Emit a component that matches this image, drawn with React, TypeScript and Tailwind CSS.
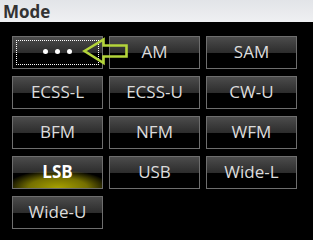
import React from "react";

const modes = ["•••", "AM", "SAM", "ECSS-L", "ECSS-U", "CW-U", "BFM", "NFM", "WFM", "LSB", "USB", "Wide-L", "Wide-U"];

function Btn({ label, idx }: { label: string; idx: number }) {
  const active = label === "LSB";
  const focused = idx === 0;
  return (
    <div className="relative h-[33px] border border-[#6e6e6e] overflow-hidden bg-black">
      <div className="absolute inset-x-0 top-0 h-1/2 bg-gradient-to-b from-[#4c4c4c] to-[#2c2c2c]" />
      {active && (
        <div className="absolute left-1/2 -translate-x-1/2 bottom-[-18px] w-[104px] h-[36px] rounded-[50%] bg-[radial-gradient(ellipse_at_center,#a8a200_0%,#757000_40%,rgba(0,0,0,0)_72%)]" />
      )}
      {focused && <div className="absolute inset-[3px] border border-dotted border-white" />}
      <div
        className={`relative flex h-full items-center justify-center pb-[2px] text-[17px] leading-none ${
          active ? "font-bold text-white" : "text-[#dcdcdc]"
        }`}
        style={{ fontFamily: '"Open Sans", "Noto Sans", sans-serif' }}
      >
        {focused ? (
          <span className="flex gap-[7px]">
            <span className="block w-[5px] h-[5px] rounded-full bg-white" />
            <span className="block w-[5px] h-[5px] rounded-full bg-white" />
            <span className="block w-[5px] h-[5px] rounded-full bg-white" />
          </span>
        ) : (
          label
        )}
      </div>
    </div>
  );
}

export default function App() {
  return (
    <div className="w-[313px] h-[240px] bg-black overflow-hidden relative">
      <div
        className="h-[22px] bg-gradient-to-b from-[#e2e4e8] to-[#eff0f2] pl-[3px] flex items-center text-[17px] font-bold text-[#333] leading-none"
        style={{ fontFamily: '"Open Sans", "Noto Sans", sans-serif' }}
      >
        Mode
      </div>
      <div className="grid grid-cols-[91px_91px_91px] gap-x-[6px] gap-y-[7px] pl-[12px] pt-[14px]">
        {modes.map((m, i) => (
          <Btn key={m} label={m} idx={i} />
        ))}
      </div>
      <svg className="absolute left-[82px] top-[37px]" width="48" height="30" viewBox="0 0 48 30">
        <path
          d="M2.5 14 L21.5 2.5 L21.5 8.5 L44.5 8.5 L44.5 19.5 L21.5 19.5 L21.5 26 Z"
          fill="none"
          stroke="#b3d43a"
          strokeWidth="2.6"
          strokeLinejoin="miter"
        />
      </svg>
    </div>
  );
}
